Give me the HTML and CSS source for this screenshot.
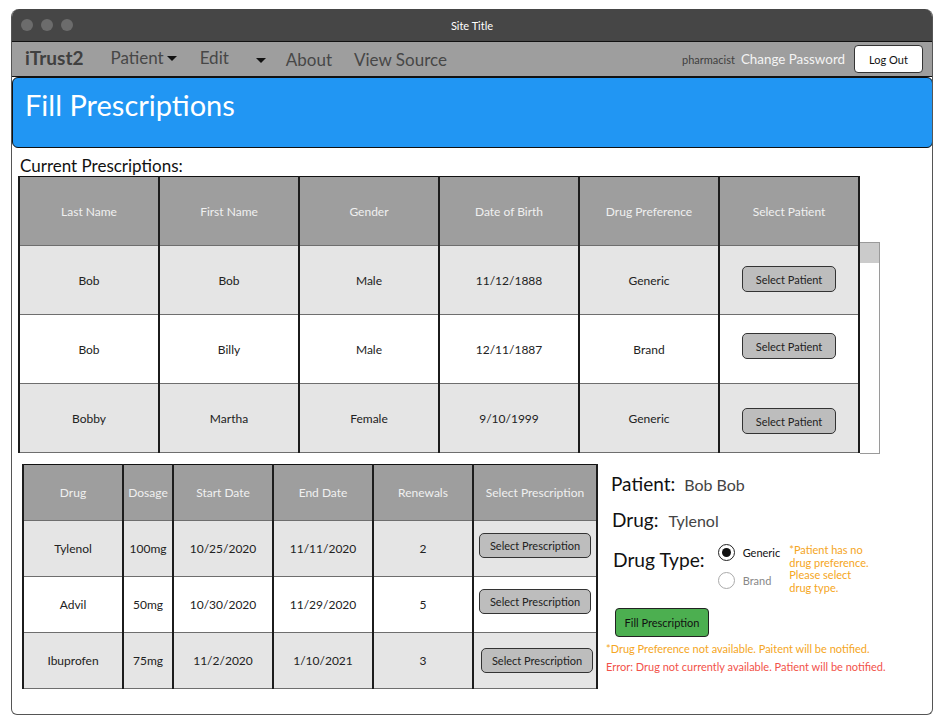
FILE: index.html
```html
<!DOCTYPE html>
<html>
<head>
<meta charset="utf-8">
<title>Fill Prescriptions</title>
<link rel="stylesheet" href="styles.css">
</head>
<body>
<div class="frame">
  <div class="titlebar">
    <div class="dots"><span class="dot"></span><span class="dot"></span><span class="dot"></span></div>
    <div class="site-title">Site Title</div>
  </div>
  <nav class="navbar">
    <div class="brand">iTrust2</div>
    <div class="nav-item patient">Patient<span class="caret"></span></div>
    <div class="nav-item edit">Edit</div>
    <span class="caret lone"></span>
    <div class="nav-item about">About</div>
    <div class="nav-item source">View Source</div>
    <div class="nav-right">
      <span class="user">pharmacist</span>
      <span class="change">Change Password</span>
      <button class="logout">Log Out</button>
    </div>
  </nav>
  <header class="page-header">
    <h1>Fill Prescriptions</h1>
  </header>
  <main class="content">
    <div class="section-title">Current Prescriptions:</div>
    <div class="patients-wrap">
      <table class="grid patients">
        <thead>
          <tr><th>Last Name</th><th>First Name</th><th>Gender</th><th>Date of Birth</th><th>Drug Preference</th><th>Select Patient</th></tr>
        </thead>
        <tbody>
          <tr class="shade"><td>Bob</td><td>Bob</td><td>Male</td><td>11/12/1888</td><td>Generic</td><td><button class="sel">Select Patient</button></td></tr>
          <tr><td>Bob</td><td>Billy</td><td>Male</td><td>12/11/1887</td><td>Brand</td><td><button class="sel up">Select Patient</button></td></tr>
          <tr class="shade"><td>Bobby</td><td>Martha</td><td>Female</td><td>9/10/1999</td><td>Generic</td><td><button class="sel down">Select Patient</button></td></tr>
        </tbody>
      </table>
      <div class="scrollbar"><div class="thumb"></div></div>
    </div>
    <div class="lower">
      <table class="grid rx">
        <thead>
          <tr><th class="c-drug">Drug</th><th class="c-dose">Dosage</th><th class="c-date">Start Date</th><th class="c-date">End Date</th><th class="c-date">Renewals</th><th class="c-sel">Select Prescription</th></tr>
        </thead>
        <tbody>
          <tr class="shade"><td>Tylenol</td><td>100mg</td><td>10/25/2020</td><td>11/11/2020</td><td>2</td><td><button class="sel rxbtn">Select Prescription</button></td></tr>
          <tr><td>Advil</td><td>50mg</td><td>10/30/2020</td><td>11/29/2020</td><td>5</td><td><button class="sel rxbtn">Select Prescription</button></td></tr>
          <tr class="shade"><td>Ibuprofen</td><td>75mg</td><td>11/2/2020</td><td>1/10/2021</td><td>3</td><td><button class="sel rxbtn shift">Select Prescription</button></td></tr>
        </tbody>
      </table>
      <section class="detail">
        <div class="row patient-row"><span class="label">Patient:</span><span class="value">Bob Bob</span></div>
        <div class="row drug-row"><span class="label">Drug:</span><span class="value">Tylenol</span></div>
        <div class="type-row">
          <span class="type-label">Drug Type:</span>
          <div class="radios">
            <label class="radio on"><span class="circle"><span class="fill"></span></span>Generic</label>
            <label class="radio off"><span class="circle"></span>Brand</label>
          </div>
          <div class="note">*Patient has no drug preference. Please select drug type.</div>
        </div>
        <button class="fill-btn">Fill Prescription</button>
        <div class="msg warn">*Drug Preference not available. Paitent will be notified.</div>
        <div class="msg err">Error: Drug not currently available. Patient will be notified.</div>
      </section>
    </div>
  </main>
</div>
</body>
</html>
```

FILE: styles.css
```css
* { box-sizing: border-box; }
html, body { margin: 0; padding: 0; background: #fff; }
body { font-family: "Lato", "Liberation Sans", sans-serif; color: #222; }

.frame {
  margin: 9px 0 0 11px;
  width: 922px;
  height: 706px;
  border: 1px solid #555;
  border-top: none;
  border-radius: 8px 8px 6px 6px;
  overflow: hidden;
  display: flex;
  flex-direction: column;
}

.titlebar {
  height: 32px;
  background: #464646;
  position: relative;
  display: flex;
  align-items: center;
  justify-content: center;
  margin: 0 -1px;
}
.dots { position: absolute; left: 10px; top: 10px; display: flex; gap: 8px; }
.dot { width: 12px; height: 12px; border-radius: 50%; background: #6c6c6c; }
.site-title { color: #fff; font-size: 11px; }

.navbar {
  height: 36px;
  background: #9e9e9e;
  border-top: 1px solid #111;
  border-bottom: 1px solid #111;
  border-left: 1px solid #111;
  margin-left: -1px;
  display: flex;
  align-items: center;
  padding-left: 13px;
  color: #474747;
}
.brand { font-weight: 700; font-size: 19px; color: #404040; margin-top: -4px; }
.nav-item { font-size: 17px; }
.patient { margin-left: 27px; margin-top: -3px; display: flex; align-items: center; }
.edit { margin-left: 23px; margin-top: -4px; }
.about { margin-left: 20px; margin-top: 1px; }
.source { margin-left: 22px; margin-top: 1px; }
.caret {
  display: inline-block;
  width: 0; height: 0;
  border-left: 5px solid transparent;
  border-right: 5px solid transparent;
  border-top: 5px solid #111;
  margin-left: 3px;
  margin-top: 2px;
}
.caret.lone { margin-left: 27px; }
.nav-right { margin-left: auto; display: flex; align-items: center; padding-right: 9px; }
.user { font-size: 11px; color: #404040; margin-right: 6px; }
.change { font-size: 13.4px; color: #f4f4f4; margin-right: 9px; }
.logout {
  font-family: inherit;
  font-size: 11px;
  color: #111;
  background: #fff;
  border: 1px solid #333;
  border-radius: 4px;
  width: 69px;
  height: 28px;
  padding: 0;
}

.page-header {
  height: 71px;
  background: #2196f3;
  border: 1px solid #111;
  border-radius: 6px;
  margin-right: -1px;
  padding-left: 12px;
}
.page-header h1 {
  margin: 0;
  font-weight: 400;
  font-size: 29px;
  color: #fff;
  line-height: 54px;
}

.content { padding: 0 0 0 6px; }
.section-title { font-size: 17px; color: #111; margin: 8px 0 0 2px; line-height: 20px; }

.patients-wrap { display: flex; align-items: flex-start; }

.grid { border-collapse: collapse; table-layout: fixed; border: 1px solid #111; }
.grid th, .grid td {
  text-align: center;
  font-weight: 400;
  padding: 0;
  border-left: 2px solid #1c1c1c;
  border-right: 2px solid #1c1c1c;
  border-top: 1px solid #6e6e6e;
  border-bottom: 1px solid #6e6e6e;
}
.grid th { background: #9e9e9e; color: #f0f0f0; font-size: 12px; }
.grid td { font-size: 12px; color: #222; background: #fff; }
.grid tr.shade td { background: #e5e5e5; }
.grid thead th { border-top: 1px solid #111; }

.patients { width: 841px; }
.patients th, .patients td { width: 140px; }
.patients thead th { height: 69px; }
.patients td { height: 69px; }

.scrollbar {
  width: 20px;
  height: 212px;
  margin-top: 66px;
  border: 1px solid #9a9a9a;
  border-left: none;
  background: #fff;
}
.thumb { height: 20px; background: #cbcbcb; }

.sel {
  font-family: inherit;
  font-size: 11px;
  color: #222;
  background: #bdbdbd;
  border: 1px solid #333;
  border-radius: 5px;
  height: 26px;
  width: 94px;
  padding: 0;
  position: relative;
  top: -1px;
}
.sel.up { top: -3px; }
.sel.down { top: 3px; }

.lower { display: flex; align-items: flex-start; margin-top: 10px; padding-left: 4px; }
.rx { width: 574px; }
.rx thead th { height: 56px; }
.rx td { height: 56px; }
.c-drug { width: 100px; }
.c-dose { width: 50px; }
.c-date { width: 100px; }
.c-sel { width: 124px; }
.rxbtn { width: 112px; height: 25px; }
.rx td .rxbtn { top: -3px; }
.rx td .rxbtn.shift { left: 2px; top: 0; }

.detail { margin-left: 8px; padding-top: 8px; flex: 1; }
.row { display: flex; align-items: baseline; margin-left: 5px; height: 24px; }
.label { font-size: 19px; color: #111; }
.value { font-size: 16px; color: #444; margin-left: 9px; }
.drug-row { margin-top: 12px; margin-left: 6px; }
.drug-row .value { margin-left: 10px; }

.type-row { display: flex; align-items: flex-start; margin-top: 9px; margin-left: 7px; }
.type-label { font-size: 19.2px; color: #111; margin-top: 7px; }
.radios { display: flex; flex-direction: column; margin-left: 13px; margin-top: 2px; gap: 9px; }
.radio { display: flex; align-items: center; font-size: 11px; height: 19px; }
.radio.on { color: #111; }
.radio.off { color: #888; }
.circle {
  width: 17px; height: 17px;
  border-radius: 50%;
  border: 1px solid #222;
  background: #fff;
  display: flex; align-items: center; justify-content: center;
  margin-right: 8px;
}
.radio.off .circle { border-color: #aaa; }
.fill { width: 9px; height: 9px; border-radius: 50%; background: #111; }
.note {
  width: 82px;
  color: #f5a623;
  font-size: 11px;
  line-height: 12.5px;
  margin-left: 9px;
  margin-top: 3px;
}

.fill-btn {
  display: block;
  font-family: inherit;
  font-size: 11px;
  color: #111;
  background: #4caf50;
  border: 1px solid #222;
  border-radius: 4px;
  width: 94px;
  height: 29px;
  padding: 0;
  margin: 14px 0 0 9px;
}
.msg { font-size: 11px; line-height: 18px; }
.warn { color: #f5a623; margin-top: 3px; }
.err { color: #f2524a; }
```
